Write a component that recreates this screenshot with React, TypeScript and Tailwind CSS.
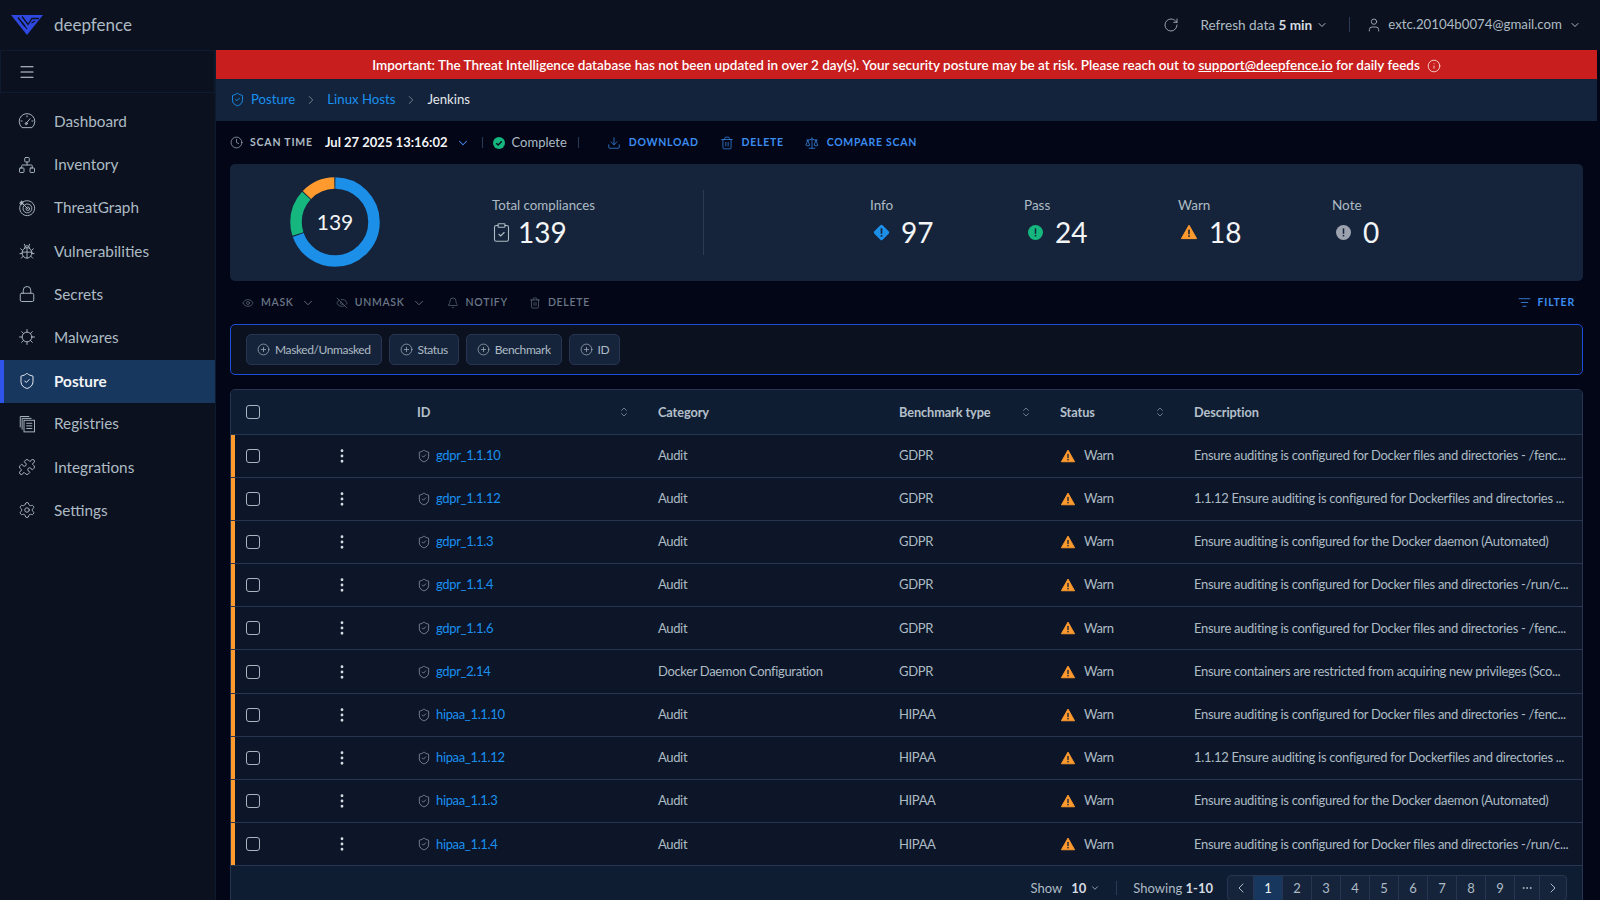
import type { ReactNode, SVGProps } from "react";
import {
  Bell,
  ChevronDown,
  ChevronLeft,
  ChevronRight,
  ChevronsUpDown,
  CirclePlus,
  ClipboardCheck,
  Clock,
  Download,
  Ellipsis,
  Eye,
  EyeOff,
  EllipsisVertical,
  Info,
  ListFilter,
  Lock,
  Menu,
  Network,
  Puzzle,
  RotateCw,
  Scale,
  Settings,
  ShieldCheck,
  Trash2,
  User,
} from "lucide-react";

type IconProps = SVGProps<SVGSVGElement>;

// nav glyphs lucide has no close match for
const DashIcon = ({ strokeWidth, ...props }: IconProps) => (
  <svg viewBox="0 0 24 24" fill="none" stroke="currentColor" strokeWidth={strokeWidth} strokeLinecap="round" strokeLinejoin="round" {...props}>
    <path d="M5 20.5a10.5 10.5 0 1 1 14 0z" />
    <path d="M11 15l5-6" />
    <circle cx="11" cy="15.5" r="1.4" />
    <path d="M12 5v1.5M5.5 12H4M20 12h-1.5" />
  </svg>
);

const RadarIcon = ({ strokeWidth, ...props }: IconProps) => (
  <svg viewBox="0 0 24 24" fill="none" stroke="currentColor" strokeWidth={strokeWidth} strokeLinecap="round" {...props}>
    <path d="M7 3.6A10 10 0 1 1 3.6 7" />
    <path d="M9 7.6A6 6 0 1 1 7.6 9" />
    <circle cx="13" cy="13" r="2.4" />
    <path d="M13 13 5 5" />
    <path d="M2.5 5 5 2.5l2 3-2 2z" fill="currentColor" />
  </svg>
);

const BugIcon = ({ strokeWidth, ...props }: IconProps) => (
  <svg viewBox="0 0 24 24" fill="none" stroke="currentColor" strokeWidth={strokeWidth} strokeLinecap="round" {...props}>
    <ellipse cx="12" cy="14.5" rx="6.5" ry="7" />
    <path d="M8.5 8.5a3.5 3.5 0 0 1 7 0" />
    <path d="M12 8v13.5M5.5 13.5h13" />
    <path d="M5.8 11 3.5 9M18.2 11l2.3-2M5.5 15.5H2.5M18.5 15.5h3M6.8 19 4.5 21.5M17.2 19l2.3 2.5M9.5 5.5 8.5 3M14.5 5.5l1-2.5" />
  </svg>
);

const MalwareIcon = ({ strokeWidth, ...props }: IconProps) => (
  <svg viewBox="0 0 24 24" fill="none" stroke="currentColor" strokeWidth={strokeWidth} strokeLinecap="round" {...props}>
    <circle cx="12" cy="12" r="6.5" />
    <path d="M12 5.5V2M12 22v-3.5M5.5 12H2M22 12h-3.5M7.4 7.4 4.9 4.9M19.1 19.1l-2.5-2.5M16.6 7.4l2.5-2.5M4.9 19.1l2.5-2.5" />
  </svg>
);

const RegistryIcon = ({ strokeWidth, ...props }: IconProps) => (
  <svg viewBox="0 0 24 24" fill="none" stroke="currentColor" strokeWidth={strokeWidth} {...props}>
    <rect x="8" y="7" width="14" height="15.5" />
    <path d="M11 11h8M11 14.5h8M11 18h8" />
    <path d="M5.5 19.5V4.5H18" />
    <path d="M3 16.5V2h12" />
  </svg>
);

const navItems = [
  { label: "Dashboard", icon: DashIcon },
  { label: "Inventory", icon: Network },
  { label: "ThreatGraph", icon: RadarIcon },
  { label: "Vulnerabilities", icon: BugIcon },
  { label: "Secrets", icon: Lock },
  { label: "Malwares", icon: MalwareIcon },
  { label: "Posture", icon: ShieldCheck, active: true },
  { label: "Registries", icon: RegistryIcon },
  { label: "Integrations", icon: Puzzle },
  { label: "Settings", icon: Settings },
];

const fenc = "Ensure auditing is configured for Docker files and directories - /fenc...";
const dockerfiles = "1.1.12 Ensure auditing is configured for Dockerfiles and directories ...";
const daemon = "Ensure auditing is configured for the Docker daemon (Automated)";
const runC = "Ensure auditing is configured for Docker files and directories -/run/c...";

const rows = [
  { id: "gdpr_1.1.10", category: "Audit", type: "GDPR", desc: fenc },
  { id: "gdpr_1.1.12", category: "Audit", type: "GDPR", desc: dockerfiles },
  { id: "gdpr_1.1.3", category: "Audit", type: "GDPR", desc: daemon },
  { id: "gdpr_1.1.4", category: "Audit", type: "GDPR", desc: runC },
  { id: "gdpr_1.1.6", category: "Audit", type: "GDPR", desc: fenc },
  { id: "gdpr_2.14", category: "Docker Daemon Configuration", type: "GDPR", desc: "Ensure containers are restricted from acquiring new privileges (Sco..." },
  { id: "hipaa_1.1.10", category: "Audit", type: "HIPAA", desc: fenc },
  { id: "hipaa_1.1.12", category: "Audit", type: "HIPAA", desc: dockerfiles },
  { id: "hipaa_1.1.3", category: "Audit", type: "HIPAA", desc: daemon },
  { id: "hipaa_1.1.4", category: "Audit", type: "HIPAA", desc: runC },
];

const Logo = () => (
  <svg width="32" height="20" viewBox="0 0 32 20">
    <path d="M0 0h32L16 20z" fill="#2f48e0" />
    <path d="M7 2.5 14 11.5M11 1.5 17 9.5 21 3.5H28" fill="none" stroke="#0b111e" strokeWidth="1.3" />
    <path d="M16 14 11 7.5M20.5 8 24 6" fill="none" stroke="#0b111e" strokeWidth="1.1" />
  </svg>
);

const WarnIcon = ({ size = 14 }: { size?: number }) => (
  <svg width={size} height={size} viewBox="0 0 16 16">
    <path d="M8 1.2 15.6 14.6H.4z" fill="#ff9a2e" stroke="#ff9a2e" strokeLinejoin="round" />
    <rect x="7.2" y="5.6" width="1.6" height="4.8" fill="#1c2536" />
    <rect x="7.2" y="11.4" width="1.6" height="1.6" fill="#1c2536" />
  </svg>
);

const Checkbox = () => (
  <div className="h-[14px] w-[14px] rounded-[3px] border border-[#a9b6c2]" />
);

const Sort = () => <ChevronsUpDown className="h-3 w-3 text-[#8a97a6]" strokeWidth={1.5} />;

const Stat = ({ label, value, icon }: { label: string; value: number; icon: ReactNode }) => (
  <div className="w-[154px] pb-[2px]">
    <div className="text-[13.5px] leading-5 text-[#adbbc4]">{label}</div>
    <div className="mt-px flex items-center gap-3">
      <span className="ml-[3px] flex w-4 justify-center">{icon}</span>
      <span className="text-[28px] leading-8 text-[#f3f4f6]">{value}</span>
    </div>
  </div>
);

const ActionBtn = ({ icon, label, chevron }: { icon: ReactNode; label: string; chevron?: boolean }) => (
  <div className="flex items-center gap-[7px] text-[10.5px] font-semibold tracking-[0.7px] text-[#6b7686]">
    {icon}
    <span>{label}</span>
    {chevron && <ChevronDown className="h-[14px] w-[14px]" strokeWidth={1.5} />}
  </div>
);

const FilterChip = ({ label }: { label: string }) => (
  <div className="flex h-[31px] items-center gap-[5px] rounded-[5px] border border-[#273551] bg-[#16243b] pl-[10px] pr-[10px] text-[12px] tracking-[-0.4px] text-[#adbbc4]">
    <CirclePlus className="h-[13px] w-[13px]" strokeWidth={1.25} />
    {label}
  </div>
);

const pageBtn = "flex h-full w-[29px] items-center justify-center border-r border-[#273551]";

export default function App() {
  return (
    <div className="flex h-[900px] w-[1600px] flex-col overflow-hidden bg-[#020617] font-['Lato',sans-serif] text-[#adbbc4]">
      <header className="flex h-[50px] shrink-0 items-center justify-between bg-[#0b111e] pl-[11px] pr-[19px]">
        <div className="flex items-center gap-[11px]">
          <Logo />
          <span className="text-[17px] text-[#adbbc4]">deepfence</span>
        </div>
        <div className="flex items-center text-[13.25px]">
          <RotateCw className="h-4 w-4 text-[#adbbc4]" strokeWidth={1.25} />
          <span className="ml-[21px] text-[13.6px]">Refresh data <b className="text-[#d5dbe1]">5 min</b></span>
          <ChevronDown className="ml-1 h-3 w-3" />
          <div className="ml-[21px] mr-4 h-[15px] w-px bg-[#2b3a55]" />
          <User className="h-4 w-4" strokeWidth={1.25} />
          <span className="ml-[6px]">extc.20104b0074@gmail.com</span>
          <ChevronDown className="ml-[7px] h-3 w-3" />
        </div>
      </header>

      <div className="flex min-h-0 flex-1">
        <aside className="w-[216px] shrink-0 border-r border-[#0e1a2e] bg-[#0b111e]">
          <div className="flex h-[43px] items-center border border-[#0f1b31] pl-[17px]">
            <Menu className="h-[18px] w-[18px] text-[#d5dbe1]" strokeWidth={1.5} />
          </div>
          <nav className="mt-[7.4px]">
            {navItems.map((item) => (
              <div
                key={item.label}
                className={
                  item.active
                    ? "flex h-[43.2px] items-center gap-[18px] border-l-4 border-[#2f54eb] bg-[#17375f] pl-[14px] text-[15.3px] font-bold text-[#f3f4f6]"
                    : "flex h-[43.2px] items-center gap-[18px] pb-px pl-[18px] text-[15.3px] text-[#adbbc4]"
                }
              >
                <item.icon className="h-[18px] w-[18px]" strokeWidth={1.25} />
                {item.label}
              </div>
            ))}
          </nav>
        </aside>

        <main className="min-w-0 flex-1 pr-[3px]">
          <div className="flex h-[29px] items-center justify-center bg-[#c81e1e] pt-[2px] text-[13.5px] font-semibold text-white">
            Important: The Threat Intelligence database has not been updated in over 2 day(s). Your security posture may be at risk. Please reach out to&nbsp;
            <span className="underline">support@deepfence.io</span>&nbsp;for daily feeds
            <Info className="ml-[7px] h-[14px] w-[14px]" strokeWidth={1.25} />
          </div>
          <div className="flex h-[42px] items-center bg-[#12233b] pb-[1px] pl-[14px] text-[13.2px]">
            <ShieldCheck className="h-[15px] w-[15px] text-[#1a90f0]" strokeWidth={1.5} />
            <span className="ml-[6px] text-[#1a90f0]">Posture</span>
            <ChevronRight className="mx-[9px] h-[14px] w-[14px] text-[#7f8b99]" strokeWidth={1.5} />
            <span className="text-[#1a90f0]">Linux Hosts</span>
            <ChevronRight className="mx-[9px] h-[14px] w-[14px] text-[#7f8b99]" strokeWidth={1.5} />
            <span className="text-[#e5e7eb]">Jenkins</span>
          </div>

          <div className="px-[14px]">
            <div className="flex h-[43px] items-center">
              <Clock className="h-[13px] w-[13px]" strokeWidth={1.25} />
              <span className="ml-[7px] text-[10.5px] font-bold tracking-[0.8px]">SCAN TIME</span>
              <span className="ml-3 text-[13px] font-bold text-[#f3f4f6]">Jul 27 2025 13:16:02</span>
              <ChevronDown className="ml-2 h-[14px] w-[14px] text-[#3b8cf0]" strokeWidth={1.75} />
              <div className="ml-3 mr-[10px] h-[11px] w-px bg-[#2b3a55]" />
              <svg width="12" height="12" viewBox="0 0 12 12">
                <circle cx="6" cy="6" r="6" fill="#15b77e" />
                <path d="M3.2 6.2 5.2 8.1 8.8 4.3" fill="none" stroke="#0b111e" strokeWidth="1.4" />
              </svg>
              <span className="ml-[7px] text-[13px] text-[#adbbc4]">Complete</span>
              <div className="ml-[11px] mr-7 h-[11px] w-px bg-[#2b3a55]" />
              <div className="flex items-center gap-[21px] text-[10.5px] font-bold tracking-[0.7px] text-[#3b8cf0]">
                <span className="flex items-center gap-[8px]"><Download className="h-[14px] w-[14px]" strokeWidth={1.25} />DOWNLOAD</span>
                <span className="flex items-center gap-[8px]"><Trash2 className="h-[14px] w-[14px]" strokeWidth={1.25} />DELETE</span>
                <span className="flex items-center gap-[8px]"><Scale className="h-[14px] w-[14px]" strokeWidth={1.25} />COMPARE SCAN</span>
              </div>
            </div>

            <section className="flex h-[117px] items-center rounded-[5px] bg-[#16243b]">
              <div className="relative mb-[2px] ml-[60px] h-[90px] w-[90px]">
                <svg width="90" height="90" viewBox="0 0 90 90" className="-rotate-90">
                  <circle cx="45" cy="45" r="39" fill="none" stroke="#1c8fe8" strokeWidth="11.5" pathLength="360" strokeDasharray="250 110" strokeDashoffset="-0.5" />
                  <circle cx="45" cy="45" r="39" fill="none" stroke="#15b77e" strokeWidth="11.5" pathLength="360" strokeDasharray="60.5 299.5" strokeDashoffset="-252" />
                  <circle cx="45" cy="45" r="39" fill="none" stroke="#ff9a2e" strokeWidth="11.5" pathLength="360" strokeDasharray="45 315" strokeDashoffset="-314" />
                </svg>
                <span className="absolute inset-0 flex items-center justify-center text-[21px] text-[#f3f4f6]">139</span>
              </div>
              <div className="ml-[112px] w-[211px] pb-[2px]">
                <div className="text-[13.3px] leading-5 text-[#adbbc4]">Total compliances</div>
                <div className="mt-px flex items-center gap-[6px]">
                  <ClipboardCheck className="-ml-px h-[21px] w-[21px]" strokeWidth={1.25} />
                  <span className="text-[28px] leading-8 text-[#f3f4f6]">139</span>
                </div>
              </div>
              <div className="h-[65px] w-px bg-[#2b3a55]" />
              <div className="ml-[166px] flex">
                <Stat
                  label="Info"
                  value={97}
                  icon={
                    <svg width="17" height="17" viewBox="0 0 16 16" className="shrink-0">
                      <rect x="2.5" y="2.5" width="11" height="11" rx="1.5" transform="rotate(45 8 8)" fill="#1c8fe8" />
                      <rect x="7.2" y="4" width="1.6" height="5.2" fill="#16243b" />
                      <rect x="7.2" y="10.4" width="1.6" height="1.6" fill="#16243b" />
                    </svg>
                  }
                />
                <Stat
                  label="Pass"
                  value={24}
                  icon={
                    <svg width="15" height="15" viewBox="0 0 16 16">
                      <circle cx="8" cy="8" r="8" fill="#15b77e" />
                      <rect x="7.2" y="3.6" width="1.6" height="5.8" fill="#16243b" />
                      <rect x="7.2" y="10.6" width="1.6" height="1.6" fill="#16243b" />
                    </svg>
                  }
                />
                <Stat label="Warn" value={18} icon={<WarnIcon size={16} />} />
                <Stat
                  label="Note"
                  value={0}
                  icon={
                    <svg width="15" height="15" viewBox="0 0 16 16">
                      <circle cx="8" cy="8" r="8" fill="#9ca3af" />
                      <rect x="7.2" y="3.6" width="1.6" height="5.8" fill="#16243b" />
                      <rect x="7.2" y="10.6" width="1.6" height="1.6" fill="#16243b" />
                    </svg>
                  }
                />
              </div>
            </section>

            <div className="flex h-[43px] items-center justify-between pl-3 pr-2">
              <div className="flex items-center gap-[21px]">
                <ActionBtn icon={<Eye className="h-3 w-3" strokeWidth={1.25} />} label="MASK" chevron />
                <ActionBtn icon={<EyeOff className="h-3 w-3" strokeWidth={1.25} />} label="UNMASK" chevron />
                <ActionBtn icon={<Bell className="h-3 w-3" strokeWidth={1.25} />} label="NOTIFY" />
                <ActionBtn icon={<Trash2 className="h-3 w-3" strokeWidth={1.25} />} label="DELETE" />
              </div>
              <div className="flex items-center gap-[7px] text-[10.5px] font-bold tracking-[0.8px] text-[#3b8cf0]">
                <ListFilter className="h-[13px] w-[13px]" strokeWidth={1.5} />
                FILTER
              </div>
            </div>

            <div className="flex h-[51px] items-center gap-[7px] rounded-[5px] border border-[#1d4ed8] bg-[#0b111e] pl-[15px]">
              <FilterChip label="Masked/Unmasked" />
              <FilterChip label="Status" />
              <FilterChip label="Benchmark" />
              <FilterChip label="ID" />
            </div>

            <div className="mt-[14px] overflow-hidden rounded-[5px] border border-[#273551] bg-[#0c1628] text-[13px] tracking-[-0.35px]">
              <div className="grid h-[44.5px] grid-cols-[186px_241px_241px_161px_134px_1fr] items-center border-b border-[#273551] bg-[#0f1d33] pt-px text-[12.75px] font-bold tracking-[-0.1px] text-[#b4c0ca]">
                <div className="pl-[15px]"><Checkbox /></div>
                <div className="flex items-center justify-between pr-[28px]">ID<Sort /></div>
                <div>Category</div>
                <div className="flex items-center justify-between pr-[28px]">Benchmark type<Sort /></div>
                <div className="flex items-center justify-between pr-[28px]">Status<Sort /></div>
                <div>Description</div>
              </div>
              {rows.map((row) => (
                <div
                  key={row.id}
                  className="grid h-[43.2px] grid-cols-[186px_241px_241px_161px_134px_1fr] items-center border-b border-[#273551] text-[#adbbc4]"
                >
                  <div className="flex h-full items-center">
                    <div className="mr-[11px] h-full w-1 bg-[#ff9a2e]" />
                    <Checkbox />
                    <EllipsisVertical className="ml-[73px] h-[18px] w-[18px] text-[#d5dbe1]" strokeWidth={1.75} />
                  </div>
                  <div className="flex items-center gap-[5px]">
                    <ShieldCheck className="h-[14px] w-[14px] text-[#9ca3af]" strokeWidth={1.25} />
                    <span className="text-[#1a90f0]">{row.id}</span>
                  </div>
                  <div>{row.category}</div>
                  <div>{row.type}</div>
                  <div className="flex items-center gap-[9px] pl-px">
                    <WarnIcon />
                    Warn
                  </div>
                  <div className="truncate tracking-[-0.3px]">{row.desc}</div>
                </div>
              ))}
              <div className="flex h-[40px] items-start justify-end bg-[#0f1d33] pr-[15px] pt-[9px] text-[13px] tracking-normal">
                <div className="flex h-[26px] items-center">
                  <span>Show</span>
                  <b className="ml-[9px] text-[#d5dbe1]">10</b>
                  <ChevronDown className="ml-1 h-[10px] w-[10px]" />
                  <div className="mx-4 h-[14px] w-px bg-[#2b3a55]" />
                  <span>Showing <b className="text-[#d5dbe1]">1-10</b></span>
                  <div className="ml-[14px] flex h-[26px] items-center rounded-[4px] border border-[#273551] bg-[#16243b]">
                    <div className="flex h-full w-[26px] items-center justify-center border-r border-[#273551]"><ChevronLeft className="h-4 w-4" strokeWidth={1.5} /></div>
                    {[1, 2, 3, 4, 5, 6, 7, 8, 9].map((n) => (
                      <div
                        key={n}
                        className={n === 1 ? "flex h-full w-[29px] items-center justify-center border-r border-[#273551] bg-[#17375f] text-[#f3f4f6]" : pageBtn}
                      >
                        {n}
                      </div>
                    ))}
                    <div className="flex h-full w-[25px] items-center justify-center border-r border-[#273551]"><Ellipsis className="h-3 w-3" /></div>
                    <div className="flex h-full w-[26px] items-center justify-center"><ChevronRight className="h-4 w-4" strokeWidth={1.5} /></div>
                  </div>
                </div>
              </div>
            </div>
          </div>
        </main>
      </div>
    </div>
  );
}
